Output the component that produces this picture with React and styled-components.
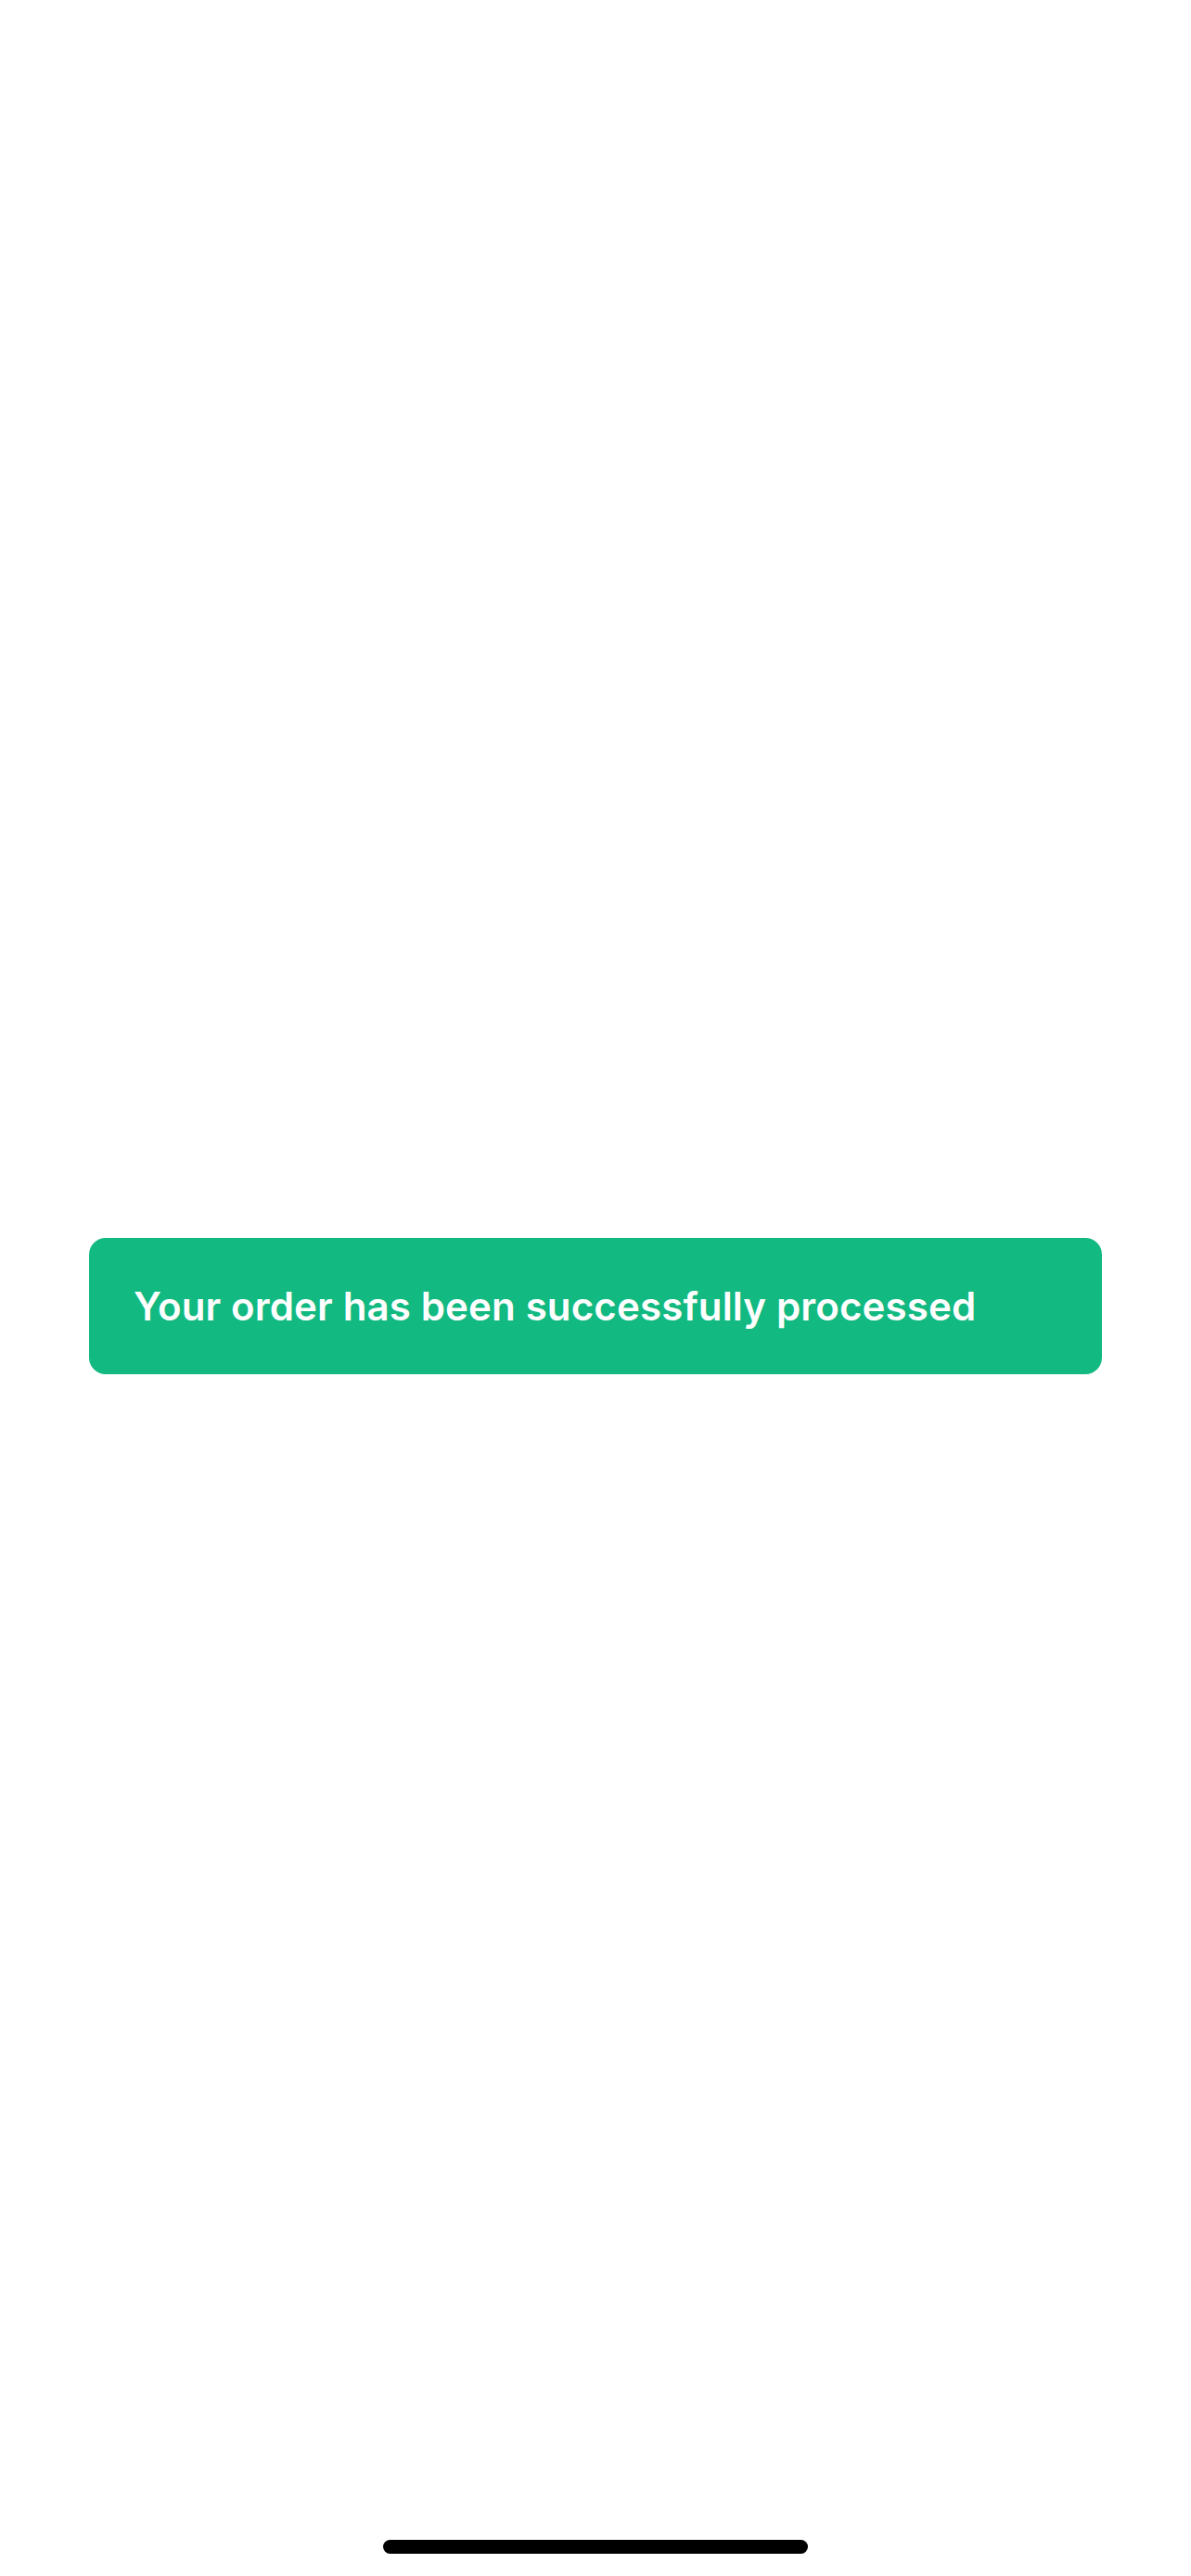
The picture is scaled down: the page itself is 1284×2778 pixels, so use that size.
import React from 'react'
import styled, { createGlobalStyle } from 'styled-components'

const GlobalStyle = createGlobalStyle`
html, body {
  margin: 0;
  padding: 0;
  background: #ffffff;
}
body {
  font-family: Inter, 'Noto Sans', 'Liberation Sans', sans-serif;
}
`

const Screen = styled.div`
height: 2778px;
width: 1284px;
display: flex;
flex-direction: column;
background: #ffffff;
`

const Main = styled.main`
flex: 1;
display: flex;
flex-direction: column;
justify-content: center;
padding: 103px 96px 0;
`

const Toast = styled.div`
height: 147px;
box-sizing: border-box;
padding: 0 48px;
display: flex;
align-items: center;
background: ${props => props.tone === 'success' ? '#12b981' : '#ef4444'};
border-radius: 18px;
`

const ToastText = styled.p`
margin: 0;
color: #ffffff;
font-size: 42px;
font-weight: 600;
letter-spacing: 0.15px;
`

const HomeBar = styled.div`
height: 64px;
display: flex;
justify-content: center;
align-items: flex-start;
`

const Indicator = styled.div`
margin-top: 25px;
width: 458px;
height: 15px;
border-radius: 8px;
background: #000000;
`

const App = () => {
  return (
    <>
      <GlobalStyle />
      <Screen>
        <Main>
          <Toast tone="success">
            <ToastText>Your order has been successfully processed</ToastText>
          </Toast>
        </Main>
        <HomeBar>
          <Indicator />
        </HomeBar>
      </Screen>
    </>
  )
}

export default App
